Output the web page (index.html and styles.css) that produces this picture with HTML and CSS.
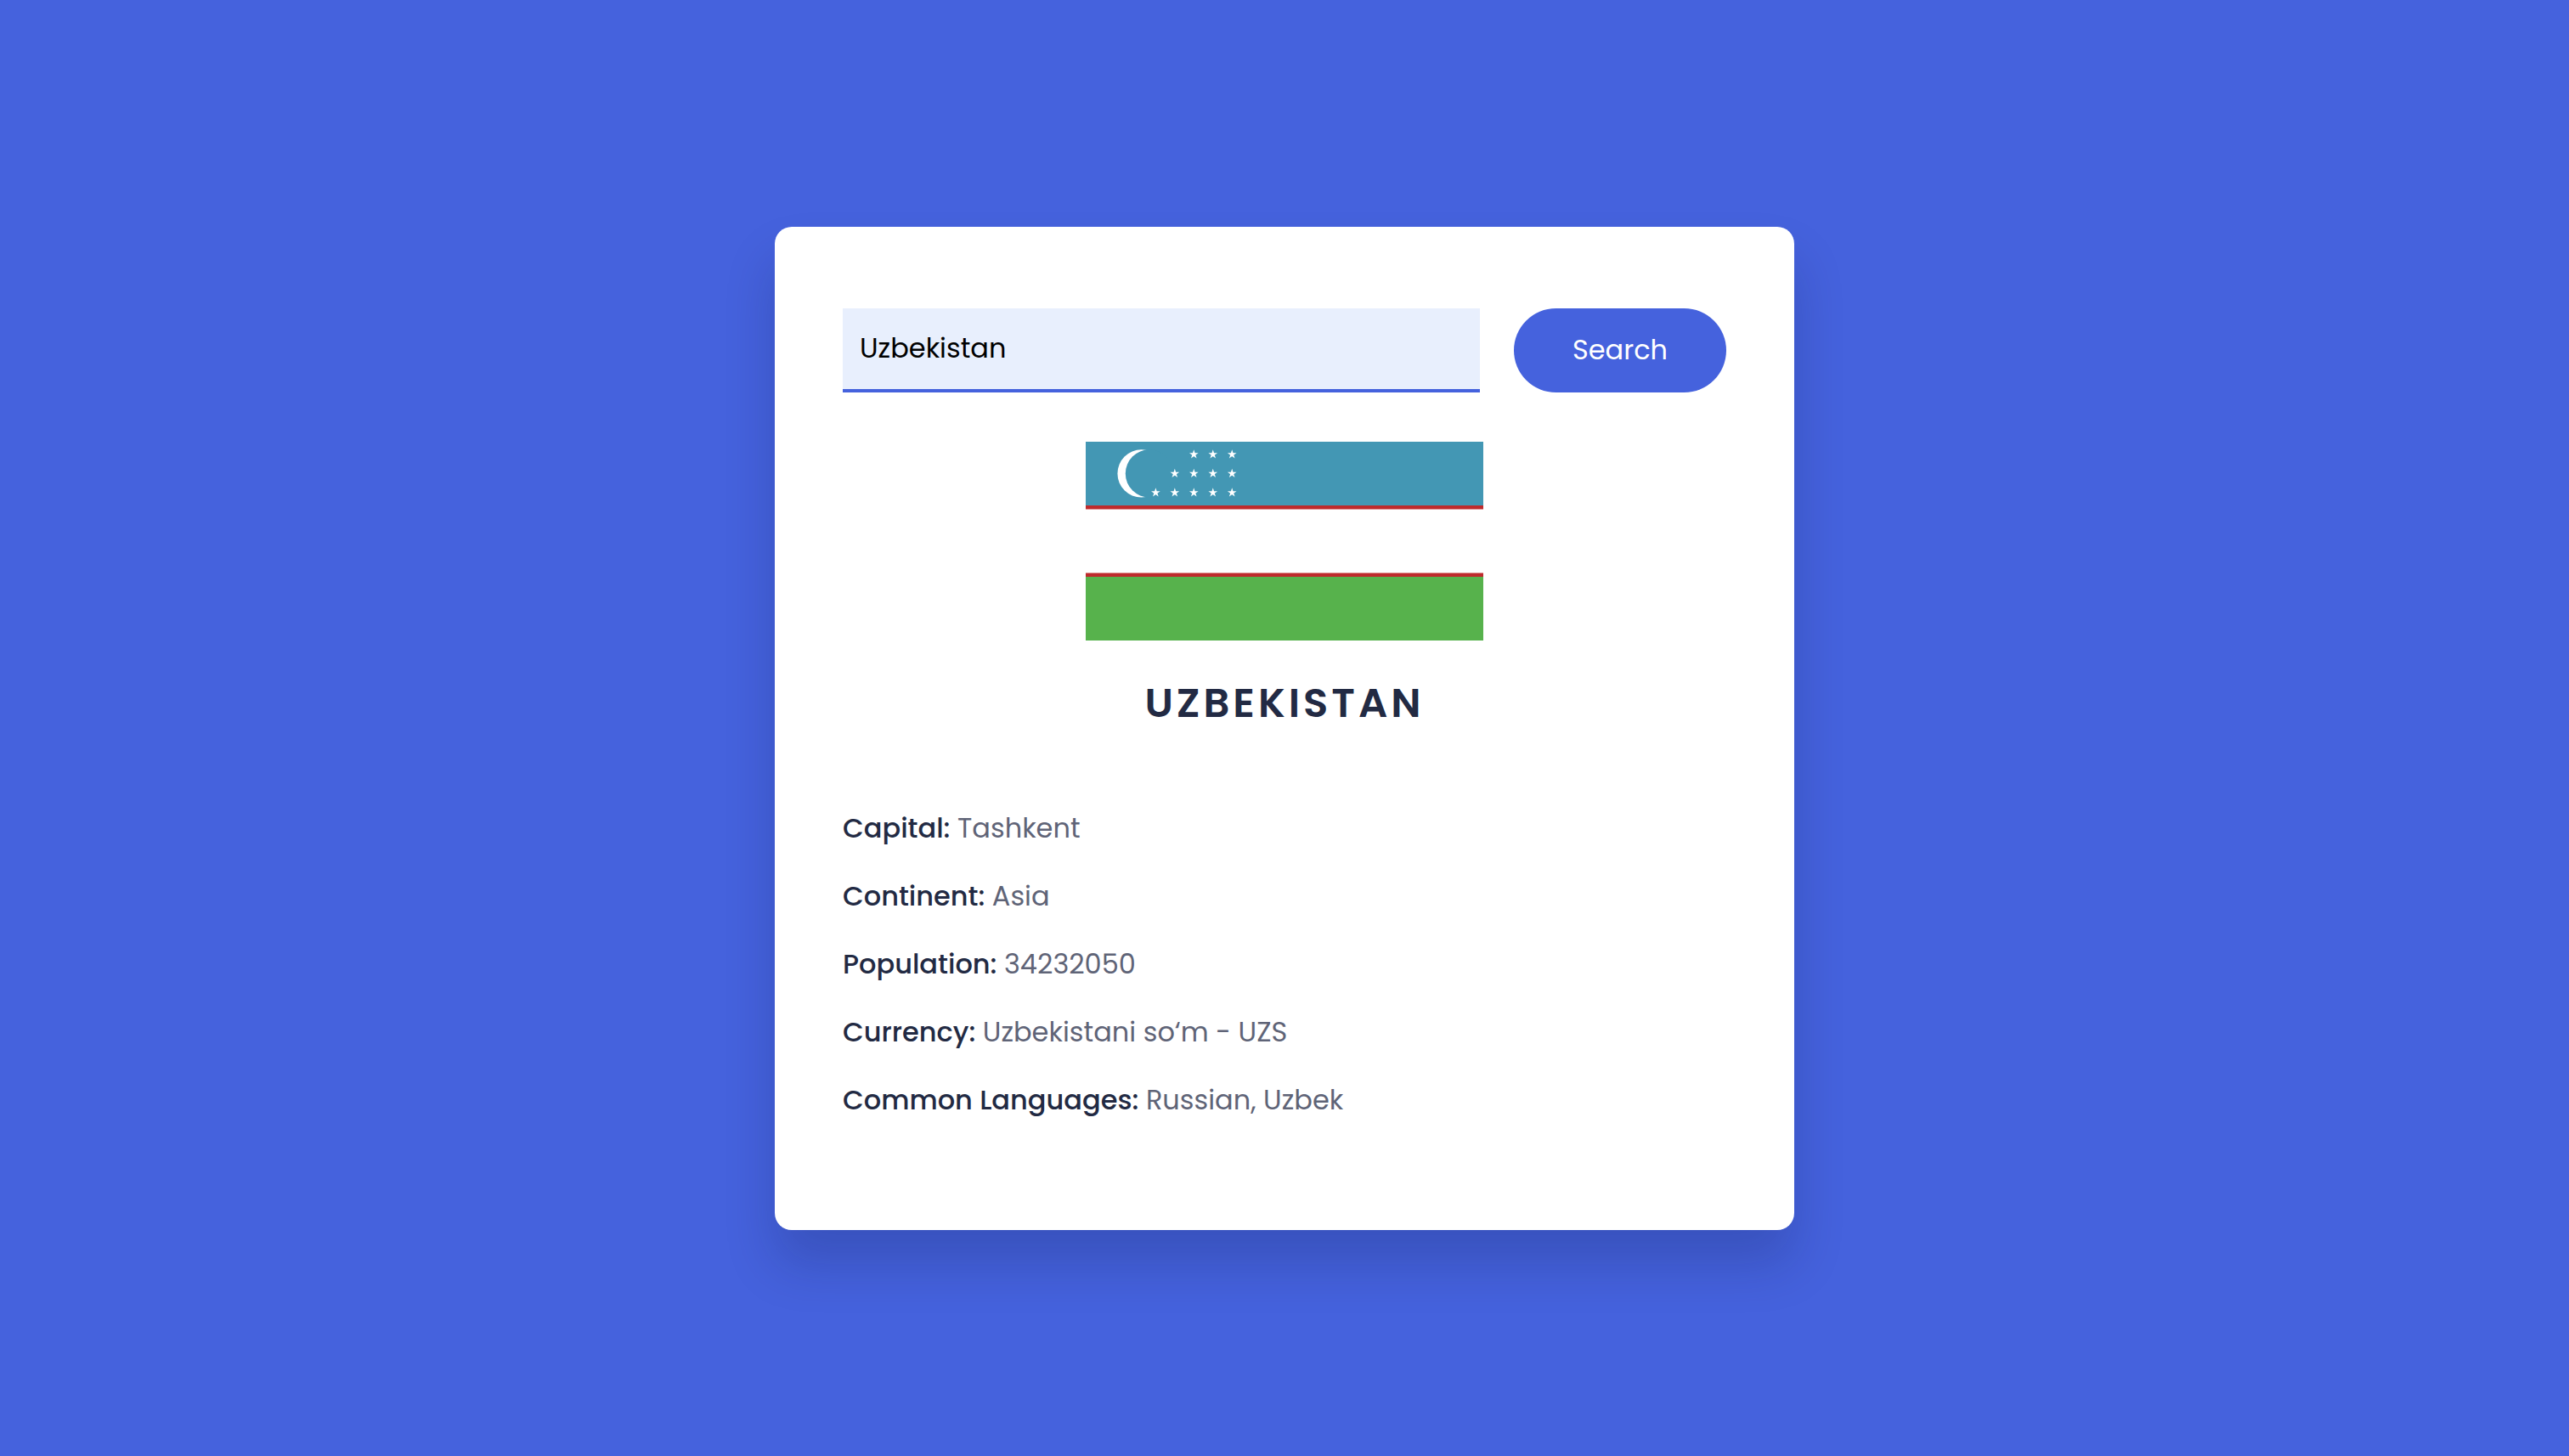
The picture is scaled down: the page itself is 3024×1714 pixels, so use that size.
FILE: index.html
```html
<!DOCTYPE html>
<html lang="en">
<head>
<meta charset="UTF-8">
<meta name="viewport" content="width=device-width, initial-scale=1">
<title>Country Guide</title>
<link rel="stylesheet" href="styles.css">
</head>
<body>
<main class="card">
  <form class="search">
    <input class="search-input" type="text" aria-label="Country name" value="Uzbekistan">
    <button class="search-button" type="button">Search</button>
  </form>
  <section class="result">
    <svg class="flag" viewBox="0 0 500 250" role="img" aria-label="Flag of Uzbekistan">
      <defs>
        <path id="star" fill="#fff" d="M0-6 3.527 4.854-5.706-1.854H5.706L-3.527 4.854z"/>
      </defs>
      <path fill="#4397b4" d="M0 0h500v82H0z"/>
      <path fill="#fff" d="M0 84h500v82H0z"/>
      <path fill="#57b24c" d="M0 168h500v82H0z"/>
      <path fill="#be2a2c" d="M0 80h500v5H0zM0 165h500v5H0z"/>
      <circle cx="70" cy="40" r="30" fill="#fff"/>
      <circle cx="80" cy="40" r="30" fill="#4397b4"/>
      <use href="#star" x="136" y="16"/><use href="#star" x="160" y="16"/><use href="#star" x="184" y="16"/>
      <use href="#star" x="112" y="40"/><use href="#star" x="136" y="40"/><use href="#star" x="160" y="40"/><use href="#star" x="184" y="40"/>
      <use href="#star" x="88" y="64"/><use href="#star" x="112" y="64"/><use href="#star" x="136" y="64"/><use href="#star" x="160" y="64"/><use href="#star" x="184" y="64"/>
    </svg>
    <h1 class="country">UZBEKISTAN</h1>
    <dl class="facts">
      <div class="fact"><dt>Capital:</dt> <dd>Tashkent</dd></div>
      <div class="fact"><dt>Continent:</dt> <dd>Asia</dd></div>
      <div class="fact"><dt>Population:</dt> <dd>34232050</dd></div>
      <div class="fact"><dt>Currency:</dt> <dd>Uzbekistani so‘m - UZS</dd></div>
      <div class="fact"><dt>Common Languages:</dt> <dd>Russian, Uzbek</dd></div>
    </dl>
  </section>
</main>
</body>
</html>
```
FILE: styles.css
```css
* {
  box-sizing: border-box;
  margin: 0;
  padding: 0;
}

body {
  min-height: 100vh;
  display: grid;
  place-items: center;
  background: #4562dd;
  font-family: Poppins, Inter, sans-serif;
  font-size: 32px;
  line-height: 48px;
  color: #222a43;
}

.card {
  width: 80vw;
  max-width: 1200px;
  padding: 96px 80px 129px;
  border-radius: 20px;
  background: #fff;
  box-shadow: 0 40px 60px rgba(8, 21, 65, 0.2);
}

.search {
  display: grid;
  grid-template-columns: 3fr 1fr;
  gap: 40px;
}

.search-input,
.search-button {
  min-width: 0;
  height: 99px;
  border: 0;
  font: inherit;
}

.search-input {
  padding: 0 20px;
  border-bottom: 4px solid #4562dd;
  background: #e8effd;
  color: #000;
  outline: none;
}

.search-button {
  border-radius: 50px;
  background: #4562dd;
  color: #fff;
  cursor: pointer;
}

.flag {
  display: block;
  width: 45%;
  margin: 58px auto 38px;
}

.country {
  margin-bottom: 87px;
  font-size: 48px;
  font-weight: 600;
  line-height: 72px;
  letter-spacing: 4px;
  text-align: center;
}

.facts {
  display: grid;
  gap: 32px;
}

.fact dt,
.fact dd {
  display: inline;
}

.fact dt {
  font-weight: 500;
}

.fact dd {
  color: #5f6477;
}
```
